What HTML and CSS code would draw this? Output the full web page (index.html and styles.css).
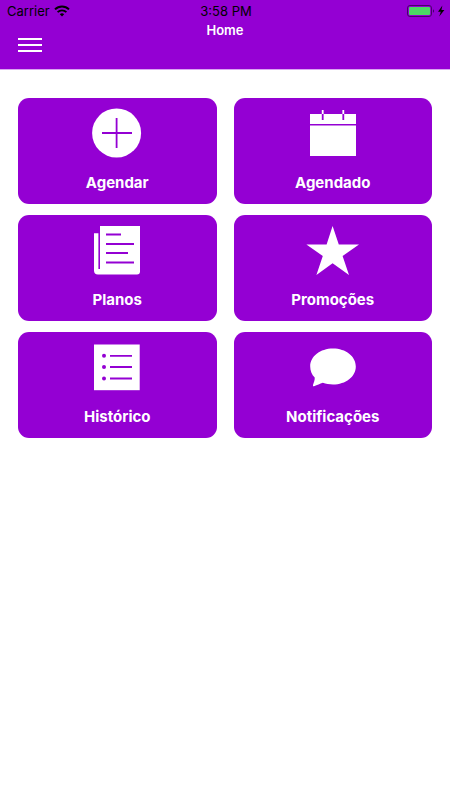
FILE: index.html
```html
<!DOCTYPE html>
<html lang="pt-BR">
<head>
    <meta charset="UTF-8">
    <meta name="viewport" content="width=device-width, initial-scale=1">
    <title>Home</title>
    <link rel="stylesheet" href="styles.css">
</head>
<body>
    <header class="header">
        <div class="status-bar">
            <div class="status-left">
                <span>Carrier</span>
                <svg class="wifi" viewBox="0 0 16 12">
                    <path d="M1 4.4a10 10 0 0 1 14 0" fill="none" stroke="#000" stroke-width="2"/>
                    <path d="M3.6 7.2a6.3 6.3 0 0 1 8.8 0" fill="none" stroke="#000" stroke-width="1.8"/>
                    <path d="M5.8 9.2a3.2 3.2 0 0 1 4.4 0L8 11.4z"/>
                </svg>
            </div>
            <span>3:58 PM</span>
            <div class="status-right">
                <svg class="battery" viewBox="0 0 38 12">
                    <rect x="0.5" y="0.5" width="24" height="11" rx="2.5" fill="none" stroke="#4a006a"/>
                    <rect x="2" y="2" width="21" height="8" rx="1" fill="#4cd964"/>
                    <path d="M26 4.2a2 2 0 0 1 0 3.6z" fill="#4a006a"/>
                    <path d="M35.4 0.6L31 6.8h2.8l-1.6 4.6L37.4 5h-3z"/>
                </svg>
            </div>
        </div>
        <h1 class="title">Home</h1>
        <button class="menu-btn" type="button" aria-label="Menu">
            <span></span>
            <span></span>
            <span></span>
        </button>
    </header>

    <main class="cards">
        <button class="card" type="button">
            <svg class="icon" viewBox="0 0 54 54">
                <circle cx="26.6" cy="27" r="24.5"/>
                <path class="line" d="M12 27h30M26.6 12v30"/>
            </svg>
            <span>Agendar</span>
        </button>
        <button class="card" type="button">
            <svg class="icon" viewBox="0 0 54 54">
                <path d="M4 8h46v10H4zM4 19.6h46V50H4zM15.8 4h1.8v4h-1.8zM36.4 4h1.8v4h-1.8z"/>
                <path class="line" d="M16.7 8v6M37.3 8v6"/>
            </svg>
            <span>Agendado</span>
        </button>
        <button class="card" type="button">
            <svg class="icon" viewBox="0 0 54 54">
                <path d="M10 3h40v45.5a3 3 0 0 1-3 3H8a4 4 0 0 1-4-4V10.3h4.4V46H10z"/>
                <path class="line" d="M16 11.5h15M16 21h28M16 30h22M16 39.5h28"/>
            </svg>
            <span>Planos</span>
        </button>
        <button class="card" type="button">
            <svg class="icon" viewBox="0 0 54 54">
                <polygon points="26.6,3 32.8,21.4 53,21.4 36.6,33 43,52 26.6,40.3 10.4,52 16.8,33 0.4,21.4 20.6,21.4"/>
            </svg>
            <span>Promoções</span>
        </button>
        <button class="card" type="button">
            <svg class="icon" viewBox="0 0 54 54">
                <rect x="4" y="4.5" width="45.7" height="45.7"/>
                <path class="line" d="M20 15.8h22M20 27h22M20 38.5h22"/>
                <g class="dots">
                    <circle cx="14" cy="15.8" r="2"/>
                    <circle cx="14" cy="27" r="2"/>
                    <circle cx="14" cy="38.5" r="2"/>
                </g>
            </svg>
            <span>Histórico</span>
        </button>
        <button class="card" type="button">
            <svg class="icon" viewBox="0 0 54 54">
                <path d="M27 8.400c12.800 0 22.800 7.800 22.800 18S39.800 44.400 27 44.400c-3.800 0-7-.6-10.200-1.700-3 1-5.400 2.300-8.800 3.500-.9.200-1.200-.4-1-1.200.8-2.400 2-5 1.700-7.400C5.700 34.400 4.200 30.400 4.200 26.400 4.200 16.200 14.200 8.400 27 8.400z"/>
            </svg>
            <span>Notificações</span>
        </button>
    </main>
</body>
</html>
```
FILE: styles.css
```css
* {
    box-sizing: border-box;
}
body {
    margin: 0;
    background: #fff;
    font-family: Inter, "Liberation Sans", sans-serif;
}
button {
    font-family: inherit;
    border: none;
    cursor: pointer;
}
.header {
    background: #9400d3;
    padding-bottom: 17px;
    border-bottom: 1px solid #d9a6f0;
}
.status-bar {
    display: grid;
    grid-template-columns: 1fr auto 1fr;
    align-items: center;
    height: 22px;
    padding: 0 5px 0 7px;
    font-size: 13px;
    color: #000;
}
.status-left {
    display: flex;
    align-items: center;
    gap: 4px;
}
.wifi {
    width: 16px;
    height: 12px;
}
.status-right {
    display: flex;
    justify-content: flex-end;
}
.battery {
    width: 38px;
    height: 12px;
}
.title {
    margin: 0;
    font-size: 13px;
    line-height: 16px;
    font-weight: 600;
    text-align: center;
    color: #fff;
}
.menu-btn {
    display: flex;
    flex-direction: column;
    gap: 4px;
    width: 24px;
    margin-left: 18px;
    padding: 0;
    background: none;
}
.menu-btn span {
    height: 2px;
    background: #fff;
}
.cards {
    display: grid;
    grid-template-columns: 1fr 1fr;
    gap: 11px 17px;
    padding: 28px 18px;
}
.card {
    display: flex;
    flex-direction: column;
    align-items: center;
    gap: 13px;
    padding: 8px 8px 11px;
    background: #9400d3;
    border-radius: 11px;
    color: #fff;
    font-size: 15px;
    line-height: 20px;
    font-weight: 700;
}
.icon {
    width: 54px;
    height: 54px;
    fill: #fff;
}
.icon .line {
    fill: none;
    stroke: #9400d3;
    stroke-width: 1.8;
}
.icon .dots {
    fill: #9400d3;
}
```
